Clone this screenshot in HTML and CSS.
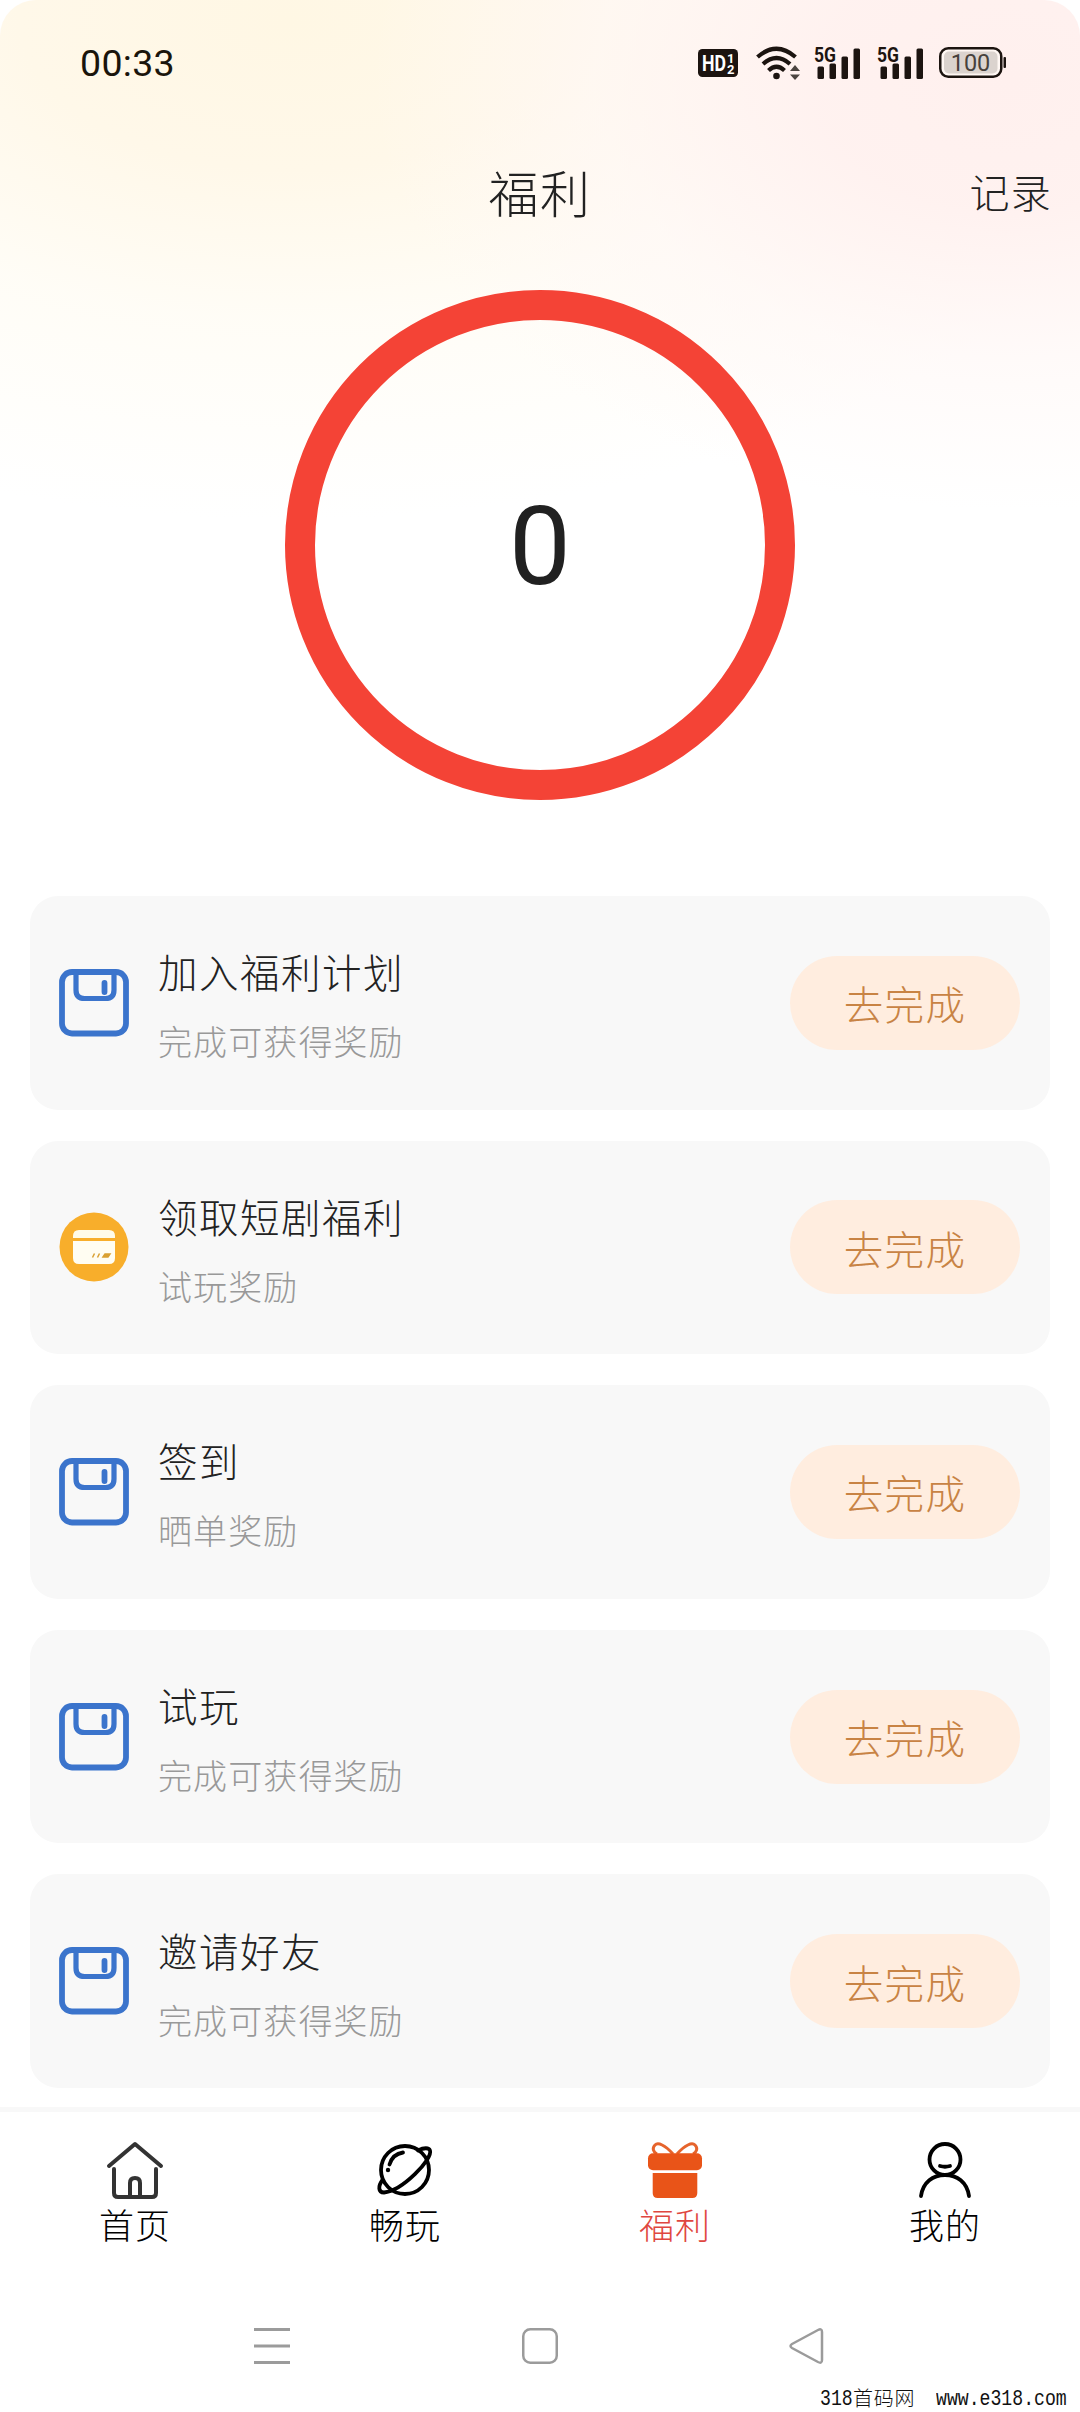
FILE: index.html
```html
<!DOCTYPE html>
<html lang="zh-CN">
<head>
<meta charset="utf-8">
<title>福利</title>
<link rel="stylesheet" href="styles.css">
</head>
<body>
<svg class="defs" aria-hidden="true">
  <symbol id="save" viewBox="0 0 70 68">
    <rect x="3" y="3" width="64" height="61.500" rx="10" fill="none" stroke="#3b74cc" stroke-width="5.8"/>
    <path d="M17 3v18q0 8.500 8.500 8.500h21q8.500 0 8.500-8.500V3" fill="none" stroke="#3b74cc" stroke-width="5.2"/>
    <path d="M45.500 14v9" stroke="#3b74cc" stroke-width="5.8" stroke-linecap="round"/>
  </symbol>
</svg>
<div class="screen">
  <header class="status">
    <span class="clock">00:33</span>
    <div class="status-icons">
      <svg width="40" height="28" viewBox="0 0 40 28">
        <rect width="40" height="28" rx="4.500" fill="#1c1410"/>
        <g fill="#fff" font-family="Roboto, sans-serif" font-weight="700"><text x="4" y="22" font-size="22" textLength="24" lengthAdjust="spacingAndGlyphs">HD</text><text x="29" y="13.500" font-size="13">1</text><text x="29" y="25" font-size="13">2</text></g>
      </svg>
      <svg class="wifi" width="46" height="36" viewBox="0 0 46 36">
        <g fill="none" stroke="#1c1410" stroke-width="4.200"><path d="M1.500 12q19-16.500 38 0"/><path d="M7 19q13.500-12 27 0"/><path d="M12.500 25.500q8-7.500 16 0"/></g>
        <circle cx="20.500" cy="31" r="3.300" fill="#1c1410"/>
        <path d="M34 26l5-6 5 6zM34 29.500l5 5.500 5-5.500z" fill="#4b4440"/>
      </svg>
      <svg class="signal" width="48" height="44" viewBox="0 -4 48 44" fill="#1c1410">
        <text x="0" y="17" font-family="Roboto, sans-serif" font-size="21" font-weight="700" textLength="22" lengthAdjust="spacingAndGlyphs">5G</text>
        <rect x="3.500" y="21.500" width="6.500" height="12.500" rx="1.500"/><rect x="15.500" y="18.500" width="6.500" height="15.500" rx="1.500"/><rect x="27.500" y="11.500" width="6.500" height="22.500" rx="1.500"/><rect x="39.500" y="3.500" width="6.500" height="30.500" rx="1.500"/>
      </svg>
      <svg class="signal" width="48" height="44" viewBox="0 -4 48 44" fill="#1c1410">
        <text x="0" y="17" font-family="Roboto, sans-serif" font-size="21" font-weight="700" textLength="22" lengthAdjust="spacingAndGlyphs">5G</text>
        <rect x="3.500" y="21.500" width="6.500" height="12.500" rx="1.500"/><rect x="15.500" y="18.500" width="6.500" height="15.500" rx="1.500"/><rect x="27.500" y="11.500" width="6.500" height="22.500" rx="1.500"/><rect x="39.500" y="3.500" width="6.500" height="30.500" rx="1.500"/>
      </svg>
      <svg class="battery" width="68" height="32" viewBox="0 0 68 32">
        <rect x="1.250" y="1.250" width="61" height="28.500" rx="8" fill="#fff7f3" stroke="#1c1410" stroke-width="2.500"/>
        <rect x="5" y="4.500" width="53.500" height="22" rx="5" fill="#dbd3ce"/>
        <rect x="64.500" y="10" width="2.500" height="11" rx="1" fill="#1c1410"/>
        <text x="31.500" y="24" text-anchor="middle" font-family="Roboto, sans-serif" font-size="23.500" fill="#47413c">100</text>
      </svg>
    </div>
  </header>
  <div class="titlebar">
    <h1 class="title">福利</h1>
    <a class="record">记录</a>
  </div>
  <div class="ring"><span class="ring-value">0</span></div>
  <main class="tasks">
    <section class="card">
      <svg class="card-icon" width="70" height="68"><use href="#save"/></svg>
      <div class="card-text"><h2 class="card-title">加入福利计划</h2><p class="card-sub">完成可获得奖励</p></div>
      <button class="go">去完成</button>
    </section>
    <section class="card">
      <svg class="card-icon" width="70" height="70" viewBox="0 0 70 70">
        <circle cx="35" cy="35" r="34.500" fill="#f8ae2b"/>
        <path d="M14 26v-2q0-6 6-6h30q6 0 6 6v2z" fill="#fffbe8"/>
        <path d="M14 29h42v17q0 6-6 6H20q-6 0-6-6z" fill="#fffdf2"/>
        <path d="M33.500 45.500l2-4M38.500 45.500l2-4M44 45l2-3h5l-2 3z" stroke="#d9a032" stroke-width="1.500" fill="#d9a032"/>
      </svg>
      <div class="card-text"><h2 class="card-title">领取短剧福利</h2><p class="card-sub">试玩奖励</p></div>
      <button class="go">去完成</button>
    </section>
    <section class="card">
      <svg class="card-icon" width="70" height="68"><use href="#save"/></svg>
      <div class="card-text"><h2 class="card-title">签到</h2><p class="card-sub">晒单奖励</p></div>
      <button class="go">去完成</button>
    </section>
    <section class="card">
      <svg class="card-icon" width="70" height="68"><use href="#save"/></svg>
      <div class="card-text"><h2 class="card-title">试玩</h2><p class="card-sub">完成可获得奖励</p></div>
      <button class="go">去完成</button>
    </section>
    <section class="card">
      <svg class="card-icon" width="70" height="68"><use href="#save"/></svg>
      <div class="card-text"><h2 class="card-title">邀请好友</h2><p class="card-sub">完成可获得奖励</p></div>
      <button class="go">去完成</button>
    </section>
  </main>
  <nav class="tabs">
    <a class="tab">
      <svg width="60" height="60" viewBox="0 0 60 60" fill="none" stroke="#333" stroke-width="4" stroke-linecap="round" stroke-linejoin="round"><path d="M4 26L30 4l26 22M9 29v24q0 4 4 4h34q4 0 4-4V29M25 57V43q0-5 5-5t5 5v14"/></svg>
      <span>首页</span>
    </a>
    <a class="tab">
      <svg width="60" height="60" viewBox="0 0 60 60" fill="none" stroke="#000" stroke-width="3.800" stroke-linecap="round"><circle cx="30" cy="30" r="24"/><path d="M43 10.500C49 7.500 54 7.500 55 10.500C58 19 27 51 9 52.500C3 52.500 3 46 7.500 40M14.500 24.500C16.500 18 21 13.500 28 12.500"/><circle cx="13" cy="30" r="2.200" fill="#000" stroke="none"/></svg>
      <span>畅玩</span>
    </a>
    <a class="tab active">
      <svg width="60" height="60" viewBox="0 0 60 60"><g fill="none" stroke="#e6642c" stroke-width="3"><path d="M28 14C20 5 13 2 10 5s-2 7 2 9"/><path d="M32 14C40 5 47 2 50 5s2 7-2 9"/></g><rect x="3" y="13.300" width="54" height="17" rx="5" fill="#e95418"/><path d="M7.700 33h44.600v20q0 5-5 5H12.700q-5 0-5-5z" fill="#e95418"/></svg>
      <span>福利</span>
    </a>
    <a class="tab">
      <svg width="60" height="60" viewBox="0 0 60 60" fill="none" stroke="#000" stroke-width="3.800" stroke-linecap="round"><circle cx="30" cy="19.500" r="15.500"/><path d="M25 26q5 1.500 10 0M6 56c2-14 12-21 24-21s22 7 24 21"/></svg>
      <span>我的</span>
    </a>
  </nav>
  <footer class="sysnav">
    <svg width="36" height="36" viewBox="0 0 36 36" stroke="#9b9b9b" stroke-width="3"><path d="M0 1.500h36M0 18h36M0 34.500h36"/></svg>
    <svg width="36" height="36" viewBox="0 0 36 36"><rect x="1.250" y="1.250" width="33.500" height="33.500" rx="7" fill="none" stroke="#9b9b9b" stroke-width="2.500"/></svg>
    <svg width="36" height="36" viewBox="0 0 36 36"><path d="M3 16L29 2q4-2 4 2v28q0 4-4 2L3 20q-3-2 0-4z" fill="none" stroke="#9b9b9b" stroke-width="2.500"/></svg>
  </footer>
  <div class="watermark"><span class="mono">318</span><span class="cjk">首码网</span><span class="mono url">www.e318.com</span></div>
</div>
</body>
</html>
```
FILE: styles.css
```css
* { box-sizing: border-box; margin: 0; padding: 0; }
body { background: #fff; font-family: Roboto, "Noto Sans CJK SC", sans-serif; }
.defs { position: absolute; width: 0; height: 0; }
.screen {
  position: relative; width: 1080px; height: 2412px;
  display: flex; flex-direction: column;
  border-radius: 36px 36px 0 0;
  background:
    radial-gradient(ellipse 640px 430px at 1010px 80px, #fff0ee 0%, rgba(255,241,239,.95) 30%, rgba(255,247,245,.6) 65%, rgba(255,255,255,0) 100%),
    radial-gradient(ellipse 900px 500px at 290px 20px, #fff7e4 0%, #fff8e9 30%, rgba(255,252,244,.8) 60%, rgba(255,255,255,0) 100%),
    #fff;
}
svg { display: block; flex: none; }
.status { height: 126px; padding: 0 73px 0 80px; display: flex; align-items: center; justify-content: space-between; }
.clock { font-size: 37.5px; letter-spacing: .3px; color: #1a150c; }
.status-icons { display: flex; align-items: center; }
.wifi { margin-left: 18px; }
.signal { margin-left: 12px; }
.signal + .signal { margin-left: 15px; }
.battery { margin-left: 14px; }
.titlebar { height: 136px; display: grid; grid-template-columns: 1fr auto 1fr; align-items: center; padding: 0 28px 6px; }
.title { grid-column: 2; font-size: 50px; font-weight: 300; letter-spacing: 1.5px; color: #222; }
.record { justify-self: end; font-size: 40px; font-weight: 300; letter-spacing: 1.2px; color: #222; }
.ring { width: 510px; height: 510px; margin: 28px auto 0; border: 30px solid #f44336; border-radius: 50%; display: flex; align-items: center; justify-content: center; }
.ring-value { padding-top: 3px; font-size: 110px; line-height: 1; color: #212121; }
.tasks { margin: 96px 30px 0; display: flex; flex-direction: column; gap: 31px; }
.card { height: 213.6px; border-radius: 28px; background: #f8f8f8; display: flex; align-items: center; padding: 0 30px 0 29px; }
.card-text { flex: 1; margin-left: 29px; padding-top: 9px; }
.card-title { font-size: 39.5px; font-weight: 300; letter-spacing: 1.5px; line-height: 58px; color: #222; }
.card-sub { margin-top: 14px; font-size: 34px; font-weight: 300; letter-spacing: 1.1px; line-height: 50px; color: #999; white-space: nowrap; }
.go { width: 230px; height: 94px; border: 0; border-radius: 47px; background: #ffeddf; color: #c88344; font-family: inherit; font-size: 39.5px; font-weight: 300; letter-spacing: 1.4px; }
.tabs { margin-top: 19px; height: 175px; border-top: 5px solid #f8f8f8; background: #fff; display: grid; grid-template-columns: repeat(4, 1fr); }
.tab { display: flex; flex-direction: column; align-items: center; gap: 3px; padding-top: 28px; font-size: 35px; font-weight: 300; letter-spacing: 1px; line-height: 50px; color: #000; }
.active { color: #df4740; }
.sysnav { margin-top: 46px; padding: 0 255px 0 254px; display: flex; justify-content: space-between; }
.watermark { position: absolute; left: 820px; top: 2388px; display: flex; align-items: center; height: 24px; color: #111; }
.mono { width: 33px; font: 22px/24px "Liberation Mono", monospace; transform: scaleX(.825); transform-origin: left; white-space: pre; }
.cjk { font-size: 20px; font-weight: 300; letter-spacing: .8px; line-height: 22px; width: 83px; padding-bottom: 2px; white-space: nowrap; }
.url { width: 131px; }
```
